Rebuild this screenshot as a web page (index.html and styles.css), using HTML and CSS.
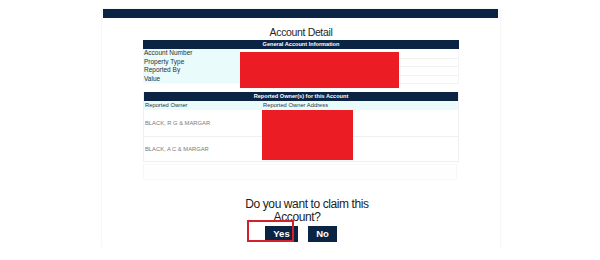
FILE: index.html
```html
<!DOCTYPE html>
<html>
<head>
<meta charset="utf-8">
<link rel="stylesheet" href="styles.css">
</head>
<body>
<div class="page">
  <div class="card">
    <div class="topbar"></div>
    <div class="title">Account Detail</div>
    <div class="tables">
      <div class="tbl">
        <div class="thead">General Account Information</div>
        <div class="row"><div class="lbl">Account Number</div><div class="val"></div></div>
        <div class="row"><div class="lbl">Property Type</div><div class="val"></div></div>
        <div class="row"><div class="lbl">Reported By</div><div class="val"></div></div>
        <div class="row"><div class="lbl">Value</div><div class="val"></div></div>
      </div>
      <div class="tbl owners">
        <div class="thead">Reported Owner(s) for this Account</div>
        <div class="orow sub"><div>Reported Owner</div><div>Reported Owner Address</div></div>
        <div class="orow item"><div>BLACK, R G &amp; MARGAR</div><div></div></div>
        <div class="orow item last"><div>BLACK, A C &amp; MARGAR</div><div></div></div>
      </div>
      <div class="empty"></div>
    </div>
    <div class="question">
      <div class="q1">Do you want to claim this</div>
      <div class="q2">Account?</div>
    </div>
    <div class="actions">
      <button class="btn yes">Yes</button>
      <button class="btn no">No</button>
    </div>
    <div class="redact r1"></div>
    <div class="redact r2"></div>
    <div class="mark"></div>
  </div>
</div>
</body>
</html>
```

FILE: styles.css
```css
html, body {
  margin: 0;
  padding: 0;
  background: #ffffff;
  font-family: "Liberation Sans", Arial, sans-serif;
}
.page {
  padding-top: 9px;
}
.card {
  position: relative;
  margin-left: 102px;
  width: 398px;
  height: 239px;
  box-shadow: 0 0 2px rgba(0, 0, 0, 0.1);
  background: #fff;
}
.topbar {
  height: 9px;
  margin: 0 2px 0 1px;
  background: #0c2444;
}
.title {
  margin-top: 9px;
  height: 11px;
  line-height: 11px;
  font-size: 10.5px;
  letter-spacing: -0.35px;
  text-align: center;
  color: #262626;
}
.tables {
  margin: 2px 41px 0 41px;
}
.thead {
  height: 9px;
  line-height: 9px;
  background: #0c2444;
  color: #fff;
  font-weight: bold;
  font-size: 5.6px;
  text-align: center;
}
.row {
  display: grid;
  grid-template-columns: 97px 1fr;
  height: 8.5px;
  line-height: 8.5px;
  font-size: 6.5px;
  color: #2e2e2e;
}
.lbl {
  background: #e9fbfb;
  padding-left: 1px;
  border-bottom: 1px solid #f4fefe;
}
.val {
  border-bottom: 1px solid #f2f2f2;
  border-right: 1px solid #f4f4f4;
}
.owners {
  margin-top: 9px;
  border-left: 1px solid #f0f0f0;
  border-right: 1px solid #f0f0f0;
}
.orow {
  display: grid;
  grid-template-columns: 118px 1fr;
  font-size: 5.8px;
}
.orow.sub {
  height: 9px;
  line-height: 9px;
  background: #e9fbfb;
  color: #333;
}
.orow.item {
  height: 26px;
  line-height: 26px;
  color: #7a7a7a;
  border-bottom: 1px solid #efefef;
}
.orow.item.last {
  height: 24px;
  line-height: 24px;
}
.orow > div {
  padding-left: 1px;
}
.empty {
  margin-top: 2px;
  width: 312px;
  height: 14px;
  border: 1px solid #f7f7f7;
  background: #fefefe;
}
.question {
  margin-top: 18px;
  font-size: 12px;
  line-height: 13px;
  letter-spacing: -0.4px;
  color: #222;
}
.q1 {
  text-align: center;
  padding-left: 12px;
}
.q2 {
  text-align: center;
  padding-right: 8px;
}
.actions {
  display: flex;
  gap: 10px;
  margin-top: 2px;
  padding-left: 163px;
}
.btn {
  height: 16px;
  border: 0;
  padding: 0;
  margin: 0;
  background: #0c2444;
  color: #fff;
  font-family: "Liberation Sans", Arial, sans-serif;
  font-weight: bold;
  font-size: 9.5px;
  line-height: 16px;
}
.yes { width: 33px; }
.no { width: 29px; }
.redact {
  position: absolute;
  background: #ec1c24;
}
.r1 {
  left: 138px;
  top: 43px;
  width: 159px;
  height: 36px;
}
.r2 {
  left: 160px;
  top: 101px;
  width: 91px;
  height: 50px;
}
.mark {
  position: absolute;
  left: 145px;
  top: 211px;
  width: 43px;
  height: 18px;
  border: 2px solid #d3202c;
}
```
